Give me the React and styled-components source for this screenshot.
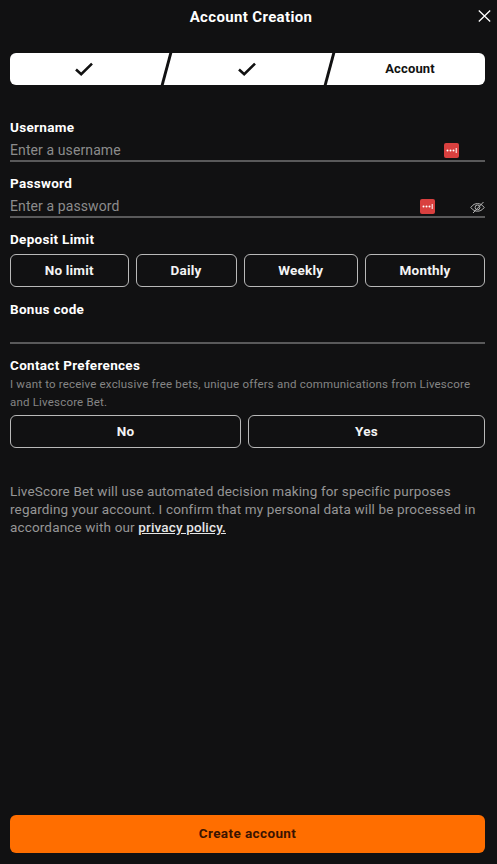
import React from "react";
import styled, { createGlobalStyle } from "styled-components";

const Global = createGlobalStyle`
  html, body { margin: 0; padding: 0; height: 100%; background: #111112; }
  * { box-sizing: border-box; }
`;

const Page = styled.div`
  height: 864px;
  display: flex;
  flex-direction: column;
  padding: 0 12px 11px 10px;
  background: #111112;
  color: #fff;
  font-family: Roboto, "Liberation Sans", sans-serif;
  overflow: hidden;
`;

const Header = styled.header`
  height: 53px;
  position: relative;
  display: flex;
  justify-content: center;
  padding-top: 8px;
`;

const Title = styled.h1`
  margin: 0;
  font-size: 15px;
  line-height: 18px;
  font-weight: 700;
  letter-spacing: 0.35px;
  padding-left: 7px;
`;

const Close = styled.button`
  position: absolute;
  right: -6px;
  top: 10px;
  width: 13px;
  height: 12px;
  padding: 0;
  border: 0;
  background: none;
  color: #fff;
  display: flex;
`;

const Stepper = styled.div`
  height: 32px;
  display: grid;
  grid-template-columns: 157px 163px 155px;
  background: #fff;
  border-radius: 6px;
  color: #111;
  position: relative;
  overflow: hidden;
`;

const Step = styled.div`
  display: flex;
  align-items: center;
  justify-content: center;
  font-size: 13px;
  line-height: 15px;
  font-weight: 700;
  letter-spacing: 0.15px;
  position: relative;
  padding: 0 ${(p) => p.$right || 0}px 0 ${(p) => p.$left || 0}px;
  &:not(:last-child)::after {
    content: "";
    position: absolute;
    top: -2px;
    bottom: -2px;
    right: 0;
    width: 2.5px;
    background: #111112;
    transform: skewX(-15deg);
  }
`;

const StepText = styled.span`
  padding-bottom: 2px;
`;

const Form = styled.div`
  display: flex;
  flex-direction: column;
  padding-top: 34px;
`;

const Label = styled.div`
  font-size: 13.5px;
  line-height: 16px;
  padding-bottom: 2px;
  font-weight: 700;
  letter-spacing: 0.3px;
`;

const Field = styled.div`
  height: 25px;
  display: flex;
  align-items: center;
  position: relative;
  margin-bottom: ${(p) => p.$mb ?? 0}px;
  &::after {
    content: "";
    position: absolute;
    left: 0;
    right: 0;
    top: 23px;
    height: 2px;
    background: #59595a;
  }
`;

const Placeholder = styled.span`
  font-size: 14px;
  line-height: 18px;
  color: #8c8c8c;
  letter-spacing: 0.1px;
`;

const Badge = styled.span`
  position: absolute;
  top: 6px;
  right: ${(p) => p.$right}px;
  width: 15px;
  height: 15px;
  border-radius: 2px;
  background: #d9403f;
  display: flex;
  align-items: center;
  justify-content: center;
`;

const Eye = styled.span`
  position: absolute;
  right: 0;
  top: 8px;
  color: #b5b5b5;
  display: flex;
`;

const Section = styled.div`
  margin-top: ${(p) => p.$mt ?? 0}px;
`;

const Options = styled.div`
  display: grid;
  grid-template-columns: ${(p) => p.$cols};
  gap: 7px;
  margin-top: ${(p) => p.$mt ?? 5}px;
`;

const Option = styled.button`
  height: 33px;
  padding: 0 0 2px;
  border: 1.5px solid #b9b9b9;
  border-radius: 6px;
  background: transparent;
  color: #f4f4f4;
  font-family: inherit;
  font-size: 13.5px;
  font-weight: 700;
  letter-spacing: 0.2px;
`;

const Note = styled.p`
  margin: 0;
  font-size: 11.5px;
  line-height: 18px;
  color: #858585;
  letter-spacing: 0.19px;
`;

const Legal = styled.p`
  margin: 34px 0 0;
  font-size: 13.5px;
  line-height: 18px;
  color: #969696;
  letter-spacing: 0.15px;
`;

const PolicyLink = styled.a`
  color: #e6e6e6;
  font-weight: 500;
  text-decoration: underline;
`;

const Submit = styled.button`
  margin-top: auto;
  height: 38px;
  padding: 0 0 2px;
  border: 0;
  border-radius: 6px;
  background: #ff6e00;
  color: #3a1300;
  font-family: inherit;
  font-size: 13.5px;
  font-weight: 700;
  letter-spacing: 0.4px;
`;

const Check = () => (
  <svg width="20" height="16" viewBox="0 0 20 16" fill="none" stroke="#111" strokeWidth="2.6">
    <path d="M2 8.5 L7.2 13.2 L18 2.6" />
  </svg>
);

const Dots = () => (
  <svg width="11" height="5" viewBox="0 0 11 5" fill="#fff">
    <circle cx="1.5" cy="2.5" r="1" />
    <circle cx="4.5" cy="2.5" r="1" />
    <circle cx="7.5" cy="2.5" r="1" />
    <rect x="9.7" y="0" width="1" height="5" />
  </svg>
);

const EyeOff = () => (
  <svg width="15" height="13" viewBox="0 0 15 13" fill="none" stroke="currentColor" strokeWidth="1">
    <path d="M0.8 6.5 C3 3.4 5.2 2.6 7.5 2.6 C9.8 2.6 12 3.4 14.2 6.5 C12 9.4 9.8 10.2 7.5 10.2 C5.2 10.2 3 9.4 0.8 6.5 Z" />
    <circle cx="7.5" cy="6.4" r="2.4" />
    <path d="M3 12 L13.5 1" />
  </svg>
);

export default function App() {
  return (
    <Page>
      <Global />
      <Header>
        <Title>Account Creation</Title>
        <Close aria-label="Close">
          <svg width="13" height="12" viewBox="0 0 13 12" stroke="currentColor" strokeWidth="1.3" fill="none">
            <path d="M0.8 0.5 L12.2 11.5 M12.2 0.5 L0.8 11.5" />
          </svg>
        </Close>
      </Header>

      <Stepper>
        <Step $right={9}><Check /></Step>
        <Step $right={4}><Check /></Step>
        <Step $left={5}><StepText>Account</StepText></Step>
      </Stepper>

      <Form>
        <Label>Username</Label>
        <Field $mb={13}>
          <Placeholder>Enter a username</Placeholder>
          <Badge $right={26}><Dots /></Badge>
        </Field>
        <Label>Password</Label>
        <Field $mb={13}>
          <Placeholder>Enter a password</Placeholder>
          <Badge $right={50}><Dots /></Badge>
          <Eye><EyeOff /></Eye>
        </Field>
        <Label>Deposit Limit</Label>
        <Options $cols="118.5px 101px 114.5px 120px">
          <Option>No limit</Option>
          <Option>Daily</Option>
          <Option>Weekly</Option>
          <Option>Monthly</Option>
        </Options>
        <Section $mt={14}>
          <Label>Bonus code</Label>
          <Field $mb={13} />
        </Section>
        <Section $mt={0}>
          <Label>Contact Preferences</Label>
          <Note>I want to receive exclusive free bets, unique offers and communications from Livescore and Livescore Bet.</Note>
          <Options $cols="231px 237px" $mt={4}>
            <Option>No</Option>
            <Option>Yes</Option>
          </Options>
        </Section>
        <Legal>
          LiveScore Bet will use automated decision making for specific purposes regarding your account. I confirm that my personal data will be processed in accordance with our <PolicyLink href="#">privacy policy.</PolicyLink>
        </Legal>
      </Form>

      <Submit>Create account</Submit>
    </Page>
  );
}
